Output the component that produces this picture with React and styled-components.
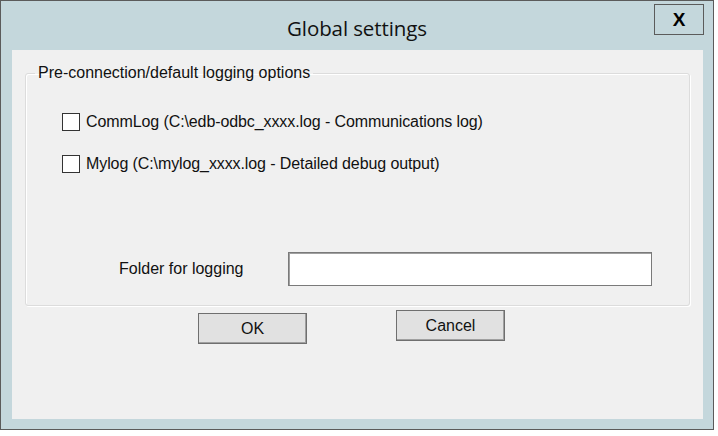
import React from "react";
import styled, { createGlobalStyle } from "styled-components";

const Global = createGlobalStyle`
  html, body { margin: 0; padding: 0; background: #ffffff; }
  body { font-family: "Liberation Sans", Arial, sans-serif; }
`;

const Window = styled.div`
  width: 712px;
  height: 428px;
  border: 1px solid #5b5b5b;
  background: #c4d7dc;
  display: flex;
  flex-direction: column;
`;

const TitleBar = styled.div`
  height: 49px;
  display: grid;
  grid-template-columns: 1fr auto 1fr;
  align-items: start;
`;

const Title = styled.div`
  grid-column: 2;
  margin-top: 14px;
  font-family: "Open Sans", "Noto Sans", sans-serif;
  font-size: 20.5px;
  line-height: 26px;
  color: #111;
  letter-spacing: -0.1px;
`;

const CloseButton = styled.div`
  grid-column: 3;
  justify-self: end;
  margin: 3px 9px 0 0;
  width: 50px;
  height: 31px;
  border: 1px solid #5b5b5b;
  box-sizing: border-box;
  display: flex;
  align-items: center;
  justify-content: center;
  font-family: "Liberation Sans", Arial, sans-serif;
  font-weight: bold;
  font-size: 19px;
  color: #000;
`;

const Client = styled.div`
  flex: 1;
  margin: 0 10px 10px 11px;
  background: #f0f0f0;
  display: flex;
  flex-direction: column;
  font-family: "Liberation Sans", Arial, sans-serif;
  color: #111;
`;

const Group = styled.fieldset`
  margin: 14px 0 0 13px;
  width: 665px;
  height: 242px;
  box-sizing: border-box;
  padding: 0;
  border: 1px solid #dcdcdc;
  border-radius: 3px;
  box-shadow: inset 1px 1px 0 #ffffff, 1px 1px 0 #ffffff;
  display: flex;
  flex-direction: column;
`;

const Legend = styled.legend`
  margin-left: 9px;
  padding: 0 3px;
  font-size: 16px;
  line-height: 18px;
`;

const CheckRow = styled.label`
  display: flex;
  align-items: center;
  gap: 6px;
  margin: ${(p) => p.$top}px 0 0 36px;
  font-size: 16px;
  line-height: 20px;
  letter-spacing: -0.1px;
`;

const Box = styled.span`
  width: 18px;
  height: 18px;
  box-sizing: border-box;
  border: 1px solid #333;
  background: #fff;
  flex: none;
`;

const FolderRow = styled.div`
  display: flex;
  align-items: center;
  margin: 78px 0 0 93px;
`;

const FolderLabel = styled.span`
  width: 169px;
  font-size: 16px;
  line-height: 20px;
`;

const TextInput = styled.div`
  width: 364px;
  height: 34px;
  box-sizing: border-box;
  border: 1px solid #7a7a7a;
  box-shadow: inset 1px 1px 0 #a0a0a0;
  background: #fff;
`;

const Buttons = styled.div`
  display: flex;
  align-items: flex-start;
  gap: 89px;
  margin: 4px 0 0 186px;
`;

const Button = styled.div`
  width: 109px;
  height: 31px;
  margin-top: ${(p) => p.$top}px;
  box-sizing: border-box;
  border: 1px solid #6f6f6f;
  box-shadow: inset -1px -1px 0 #a0a0a0;
  background: #e1e1e1;
  display: flex;
  align-items: center;
  justify-content: center;
  font-size: 16px;
  color: #111;
`;

export default function App() {
  return (
    <>
      <Global />
      <Window>
        <TitleBar>
          <Title>Global settings</Title>
          <CloseButton>X</CloseButton>
        </TitleBar>
        <Client>
          <Group>
            <Legend>Pre-connection/default logging options</Legend>
            <CheckRow $top={30}>
              <Box />
              CommLog (C:\edb-odbc_xxxx.log - Communications log)
            </CheckRow>
            <CheckRow $top={22}>
              <Box />
              Mylog (C:\mylog_xxxx.log - Detailed debug output)
            </CheckRow>
            <FolderRow>
              <FolderLabel>Folder for logging</FolderLabel>
              <TextInput />
            </FolderRow>
          </Group>
          <Buttons>
            <Button $top={3}>OK</Button>
            <Button $top={0}>Cancel</Button>
          </Buttons>
        </Client>
      </Window>
    </>
  );
}
